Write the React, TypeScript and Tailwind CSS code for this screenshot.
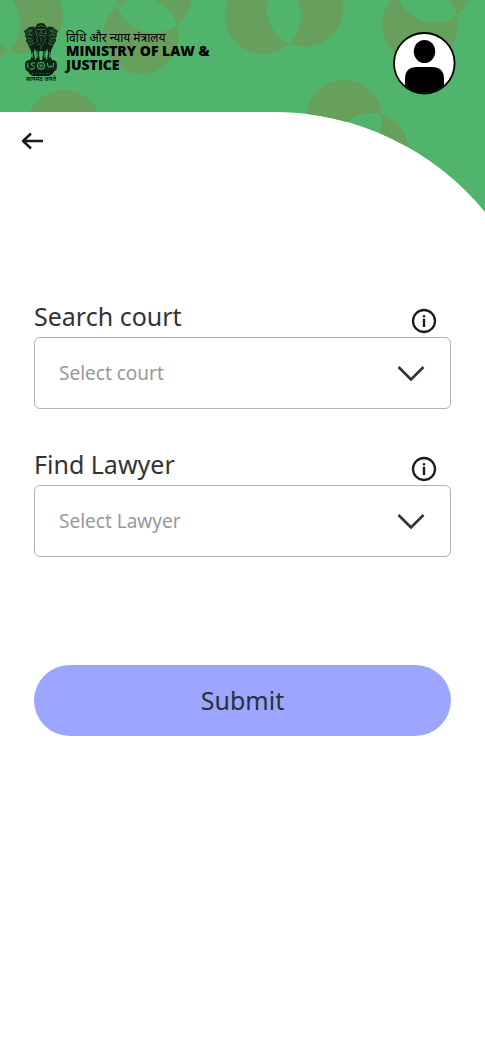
import React from "react";

const circle = (cx: number, cy: number, r = 38) =>
  `M${cx - r} ${cy}a${r} ${r} 0 1 0 ${r * 2} 0a${r} ${r} 0 1 0 ${-r * 2} 0Z`;

const rings: [number, number][][] = [
  [[25, 16], [-18, 24]],
  [[141, 36], [154, -5]],
  [[263, 16], [305, 9]],
  [[420, 25], [434, -15]],
  [[344, 118], [371, 151]],
  [[64, 128]],
];

function HeaderBackdrop() {
  return (
    <svg viewBox="0 0 485 212" className="absolute inset-x-0 top-0 w-full" aria-hidden="true">
      <defs>
        <clipPath id="header-shape">
          <path d="M0 0H485V212A272 272 0 0 0 276 112H0Z" />
        </clipPath>
      </defs>
      <g clipPath="url(#header-shape)">
        <rect width="485" height="212" fill="#50b46c" />
        {rings.map((pair, i) => (
          <path key={i} fillRule="evenodd" fill="#67a05c" d={pair.map(([x, y]) => circle(x, y)).join("")} />
        ))}
      </g>
    </svg>
  );
}

function Emblem() {
  return (
    <svg viewBox="0 0 34 53" className="h-[53px] w-[34px]" aria-hidden="true">
      {/* side lions */}
      <path
        d="M10 3.500 5 4 3 6 0 8 1.500 11 1 13 2.500 15 2 18 4 21 6 26H12V6ZM24 3.500 29 4 31 6 34 8 32.500 11 33 13 31.500 15 32 18 30 21 28 26H22V6Z"
        fill="#122d1a"
      />
      {/* centre lion */}
      <path
        d="M17 0 14 .5 12 3 11 6 10 9 11 12 9 15 10 19 9 23 12 28H22L25 23 24 19 25 15 23 12 24 9 23 6 22 3 20 .5Z"
        fill="#0b2011"
      />
      <g fill="none" stroke="#4a935b" strokeWidth=".7" strokeLinecap="round">
        <path d="M14 3.500Q17 1.500 20 3.500M13 6.500H16M18 6.500H21M17 6V9M14.500 10.500Q17 9 19.500 10.500M15 12.500H19M12 8Q12 13 14 15M22 8Q22 13 20 15" />
        <path d="M4 6.500 7 8M2.500 9H5.500L8 7M3 12 6 11 8 13M30 6.500 27 8M31.500 9H28.500L26 7M31 12 28 11 26 13" />
        <path
          d="M4 15 7 16M4.500 18Q7 20 9 17M6 22 10 20M30 15 27 16M29.500 18Q27 20 25 17M28 22 24 20M12 16 14 18 12 20M17 15V18M22 16 20 18 22 20M14 22 16 20M20 22 18 20M17 22V26"
          strokeDasharray="1.500 1"
        />
      </g>
      {/* legs */}
      <path
        d="M6 23H11L10 30 11 37H6L8 33ZM12 25H16L15 31 16 38H11L13 33ZM18 25H22L21 33 23 38H18L19 31ZM23 23H28L26 33 28 37H23L24 30Z"
        fill="#0c2413"
      />
      <path d="M8.500 29V35M13.800 28V35M20.200 28V35M25.500 29V35" stroke="#5aa86c" strokeWidth=".7" />
      {/* abacus with wheel and animals */}
      <rect x="1" y="37" width="32" height="11.500" rx="4.500" fill="#0d2815" />
      <g fill="none" stroke="#4fae69" strokeWidth="1">
        <circle cx="17" cy="42.700" r="3.700" />
        <path d="M17 39V46.500M13.300 42.700H20.700M14.500 40.200 19.500 45.200M19.500 40.200 14.500 45.200" strokeWidth=".5" />
        <path d="M11 40H7.500Q6 42 9 42.700Q12 44 9.500 46H6M23.500 40Q24 46 26 44Q27 41 28 44Q30 45 29.500 40M3.800 40V45" />
      </g>
      {/* lotus base */}
      <path d="M3.500 47.500H30.500L28.500 51 25 53H9L5.500 51Z" fill="#0a1c10" />
      <path d="M8 50.500H26" stroke="#2f6a3e" strokeWidth=".8" strokeDasharray="2 1.500" />
    </svg>
  );
}

function Avatar() {
  return (
    <svg viewBox="0 0 64 64" className="size-16" aria-hidden="true">
      <defs>
        <clipPath id="avatar-disc">
          <circle cx="32" cy="32" r="30" />
        </clipPath>
      </defs>
      <circle cx="32.300" cy="32.300" r="30.300" fill="#fff" stroke="#000" strokeWidth="1.800" />
      <ellipse cx="32.500" cy="20.500" rx="10.700" ry="11.500" />
      <path
        clipPath="url(#avatar-disc)"
        d="M13 64V48Q13 36 25 36H40Q52 36 52 48V64Z"
      />
    </svg>
  );
}

function InfoIcon() {
  return (
    <svg viewBox="0 0 26 26" className="size-[26px]" fill="none" aria-hidden="true">
      <circle cx="13" cy="13" r="11" stroke="#1b1b1f" strokeWidth="2.300" />
      <path d="M13 10.700V19" stroke="#1b1b1f" strokeWidth="2.400" />
      <circle cx="13" cy="8.200" r="1.200" fill="#1b1b1f" />
    </svg>
  );
}

type FieldProps = { id: string; label: string; placeholder: string };

function SelectField({ id, label, placeholder }: FieldProps) {
  return (
    <div>
      <div className="flex h-9 items-center justify-between pr-[14px]">
        <label htmlFor={id} className="pb-[6px] text-[25px] leading-[30px] text-[#333333]">
          {label}
        </label>
        <button type="button" aria-label={`About ${label}`} className="mt-1">
          <InfoIcon />
        </button>
      </div>
      <div className="relative">
        <select
          id={id}
          defaultValue=""
          className="block h-[72px] w-full appearance-none rounded-md border border-[#b3b3b3] bg-white pr-16 pl-6 text-[19px] text-[#999999]"
        >
          <option value="">{placeholder}</option>
        </select>
        <svg
          viewBox="0 0 28 16"
          className="pointer-events-none absolute top-7 right-[26px] h-4 w-7"
          fill="none"
          stroke="#333333"
          strokeWidth="2.600"
          aria-hidden="true"
        >
          <path d="M1.500 2 14 14.500 26.500 2" />
        </svg>
      </div>
    </div>
  );
}

export default function App() {
  return (
    <div className="relative min-h-screen bg-white font-['Noto_Sans',sans-serif]">
      <HeaderBackdrop />
      <header className="relative flex h-28 items-start justify-between pr-[29px] pl-6">
        <div className="flex gap-2 pt-[23px] text-black">
          <div className="flex w-[34px] flex-col items-center">
            <Emblem />
            <span className="text-[6px] leading-[7px] font-medium whitespace-nowrap">सत्यमेव जयते</span>
          </div>
          <div className="pt-2 font-['Open_Sans','Noto_Sans',sans-serif]">
            <p className="text-xs leading-[13px]">विधि और न्याय मंत्रालय</p>
            <h1 className="text-sm leading-[14px] font-extrabold">
              MINISTRY OF LAW &amp;
              <br />
              JUSTICE
            </h1>
          </div>
        </div>
        <button type="button" aria-label="Profile" className="mt-[31px]">
          <Avatar />
        </button>
      </header>
      <main className="relative">
        <a href="#" aria-label="Back" className="ml-5 block w-6 pt-[18px]">
          <svg
            viewBox="0 0 24 22"
            className="block h-[22px] w-6"
            fill="none"
            stroke="#1b1b1f"
            strokeWidth="2.400"
            strokeLinejoin="round"
            aria-hidden="true"
          >
            <path d="M23 11H3M11 3.500 3 11 11 18.500" />
          </svg>
        </a>
        <form className="px-[34px] pt-[149px]" onSubmit={(e) => e.preventDefault()}>
          <div className="flex flex-col gap-10">
            <SelectField id="court" label="Search court" placeholder="Select court" />
            <SelectField id="lawyer" label="Find Lawyer" placeholder="Select Lawyer" />
          </div>
          <button
            type="submit"
            className="mt-[108px] block h-[71px] w-full rounded-full bg-[#9ca5ff] text-[25px] text-[#263238]"
          >
            Submit
          </button>
        </form>
      </main>
    </div>
  );
}
